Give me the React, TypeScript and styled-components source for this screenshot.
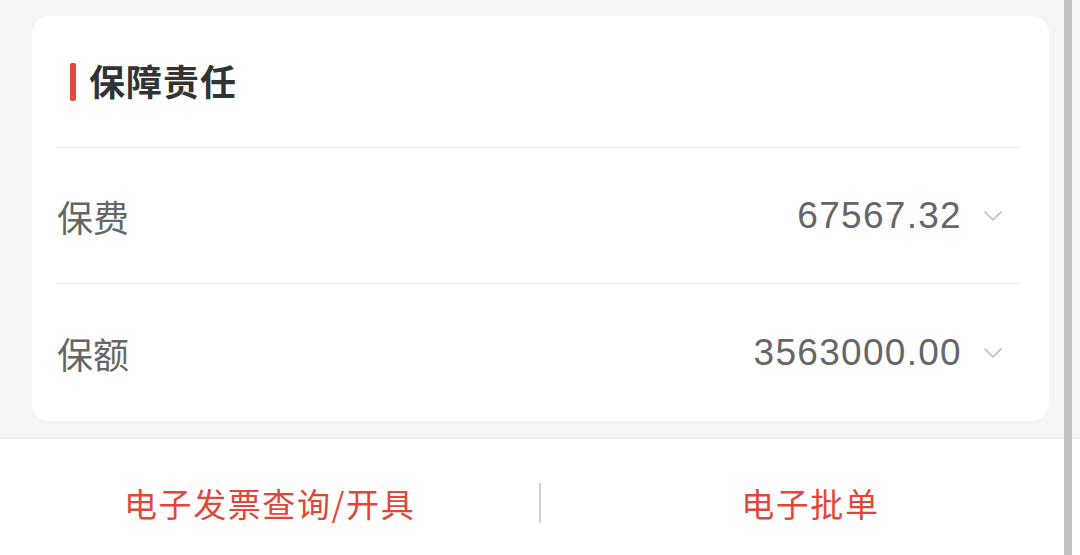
import React from "react";
import styled, { createGlobalStyle } from "styled-components";

const Global = createGlobalStyle`
  html, body { margin: 0; padding: 0; background: #f5f5f5; }
  body { font-family: "Noto Sans CJK SC", "Noto Sans", sans-serif; overflow: hidden; }
`;

const Page = styled.div`
  position: relative;
  width: 1080px;
  height: 555px;
  overflow: hidden;
  background: #f5f5f5;
  display: flex;
  flex-direction: column;
`;

const Content = styled.div`
  padding: 16px 31px 17px 32px;
`;

const Card = styled.section`
  background: #ffffff;
  border-radius: 18px;
  padding: 0 29px 0 25px;
  display: flex;
  flex-direction: column;
`;

const TitleRow = styled.div`
  height: 132px;
  display: flex;
  align-items: center;
  padding-left: 13px;
  gap: 13px;
  border-bottom: 1.5px solid #ececec;
  box-sizing: border-box;
`;

const TitleBar = styled.span`
  width: 6px;
  height: 38px;
  border-radius: 2px;
  background: #e2473b;
`;

const Title = styled.h2`
  margin: 0;
  font-size: 36px;
  font-weight: 700;
  color: #333333;
  letter-spacing: 1px;
  transform: translateY(-2px);
`;

const Row = styled.div<{ $last?: boolean }>`
  height: ${(p) => (p.$last ? 137 : 136)}px;
  display: flex;
  align-items: center;
  justify-content: space-between;
  box-sizing: border-box;
  border-bottom: ${(p) => (p.$last ? "none" : "1.5px solid #ececec")};
`;

const Label = styled.span`
  font-size: 36px;
  color: #666666;
`;

const ValueGroup = styled.div`
  display: flex;
  align-items: center;
  gap: 22px;
  padding-right: 18px;
`;

const Value = styled.span`
  font-family: "Liberation Sans", "Noto Sans CJK SC", sans-serif;
  font-size: 37px;
  letter-spacing: 1.3px;
  color: #666666;
`;

const Footer = styled.footer`
  flex: none;
  height: 128px;
  background: #ffffff;
  border-top: 1.5px solid #e6e6e6;
  display: flex;
  align-items: center;
`;

const Action = styled.button`
  flex: 1;
  height: 100%;
  border: none;
  background: transparent;
  font-family: "Noto Sans CJK SC", sans-serif;
  font-size: 33px;
  color: #e0473a;
  letter-spacing: 1.6px;
  padding: 0;
  cursor: pointer;
`;

const VDivider = styled.span`
  width: 1.5px;
  height: 40px;
  background: #cfcfcf;
`;

const ScrollBar = styled.div`
  position: absolute;
  top: 0;
  bottom: 0;
  right: 8px;
  width: 8px;
  background: #c2c2c2;
`;

const Chevron = () => (
  <svg width="18" height="10" viewBox="0 0 18 10" fill="none">
    <path d="M1 1 L9 9 L17 1" stroke="#bdbdbd" strokeWidth="1.6" strokeLinecap="round" strokeLinejoin="round" />
  </svg>
);

const rows = [
  { label: "保费", value: "67567.32" },
  { label: "保额", value: "3563000.00" },
];

export default function App() {
  return (
    <>
      <Global />
      <Page>
        <Content>
          <Card>
            <TitleRow>
              <TitleBar />
              <Title>保障责任</Title>
            </TitleRow>
            {rows.map((r, i) => (
              <Row key={r.label} $last={i === rows.length - 1}>
                <Label>{r.label}</Label>
                <ValueGroup>
                  <Value>{r.value}</Value>
                  <Chevron />
                </ValueGroup>
              </Row>
            ))}
          </Card>
        </Content>
        <Footer>
          <Action>电子发票查询/开具</Action>
          <VDivider />
          <Action>电子批单</Action>
        </Footer>
        <ScrollBar />
      </Page>
    </>
  );
}
